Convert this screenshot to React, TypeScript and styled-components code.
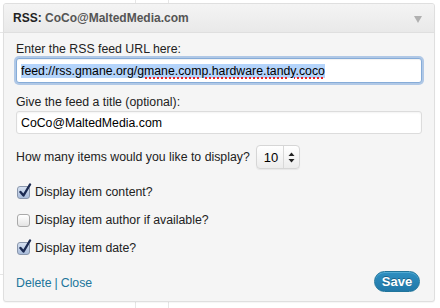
import React from 'react'
import styled, { createGlobalStyle } from 'styled-components'

const GlobalStyle = createGlobalStyle`
  html, body {
    margin: 0;
    padding: 0;
    background-color: #fff;
  }
  body {
    width: 440px;
    height: 308px;
    overflow: hidden;
    font-family: 'Liberation Sans', Arial, sans-serif;
    font-size: 12.3px;
    color: #222;
    background-image:
      linear-gradient(#e6e6e6, #e6e6e6),
      linear-gradient(#e6e6e6, #e6e6e6),
      linear-gradient(#e6e6e6, #e6e6e6),
      linear-gradient(#e6e6e6, #e6e6e6);
    background-repeat: no-repeat;
    background-size: 1px 308px, 1px 308px, 4px 1px, 4px 1px;
    background-position: 135px 0, 168px 0, 0 32px, 0 274px;
  }
`

const Widget = styled.div`
  margin: 3px 0 0 3px;
  width: 430px;
  border: 1px solid #dfdfdf;
  border-radius: 3px;
  background: #f5f5f5;
  box-shadow: 0 1px 1px rgba(0, 0, 0, 0.04);
  overflow: hidden;
`

const Header = styled.div`
  height: 28px;
  display: flex;
  align-items: center;
  justify-content: space-between;
  padding: 0 12px 0 9px;
  background: linear-gradient(#f4f4f4, #e9e9e9);
  border-bottom: 1px solid #dfdfdf;
`

const Title = styled.h3`
  margin: 0;
  font-size: 12px;
  font-weight: bold;
  color: #555;
`

const TitleKey = styled.span`
  color: #222;
`

const Toggle = styled.span`
  width: 0;
  height: 0;
  border-left: 4px solid transparent;
  border-right: 4px solid transparent;
  border-top: 7px solid #b0b0b0;
  margin-top: 2px;
`

const Body = styled.div`
  padding: 8px 12px 9px 12px;
`

const Label = styled.div`
  line-height: 16px;
`

const Field = styled.div<{ $focused?: boolean }>`
  margin-top: 1px;
  height: ${(p) => (p.$focused ? 25 : 23)}px;
  box-sizing: border-box;
  display: flex;
  align-items: center;
  padding: 0 4px;
  background: #fff;
  color: #000;
  border: 1px solid ${(p) => (p.$focused ? '#86acd8' : '#dcdcdc')};
  border-radius: 3px;
  box-shadow: ${(p) =>
    p.$focused
      ? '0 0 0 2px rgba(130, 170, 220, 0.6), inset 0 1px 1px rgba(0,0,0,0.06)'
      : 'inset 0 1px 2px rgba(0,0,0,0.05)'};
  white-space: nowrap;
`

const Selected = styled.span`
  background: #b4d4fb;
`

const Misspelled = styled.span`
  text-decoration: underline dotted #e22;
  text-decoration-thickness: 2px;
  text-underline-offset: 3px;
`

const Group = styled.div<{ $gap: number }>`
  margin-top: ${(p) => p.$gap}px;
`

const SelectRow = styled.div`
  margin-top: 11px;
  display: flex;
  align-items: center;
  gap: 6px;
  height: 24px;
`

const Select = styled.div`
  width: 44px;
  height: 24px;
  box-sizing: border-box;
  display: flex;
  align-items: stretch;
  border: 1px solid #d6d6d6;
  border-radius: 4px;
  background: linear-gradient(#ffffff, #ececec);
  box-shadow: 0 1px 1px rgba(0, 0, 0, 0.06);
  color: #000;
  font-size: 13px;
`

const SelectValue = styled.span`
  flex: 1;
  display: flex;
  align-items: center;
  padding-left: 7px;
  border-right: 1px solid #d8d8d8;
`

const SelectArrows = styled.span`
  width: 15px;
  display: flex;
  align-items: center;
  justify-content: center;
`

const CheckRow = styled.label`
  display: flex;
  align-items: center;
  gap: 5px;
  line-height: 16px;
  margin-top: 12px;
  padding-left: 1px;
  &:first-of-type {
    margin-top: 15px;
  }
`

const Box = styled.span<{ $checked?: boolean }>`
  position: relative;
  width: 13px;
  height: 13px;
  box-sizing: border-box;
  border: 1px solid ${(p) => (p.$checked ? '#8a97ad' : '#a9a9a9')};
  border-radius: 3px;
  background: ${(p) =>
    p.$checked ? 'linear-gradient(#d6e1f1, #a9bcda)' : 'linear-gradient(#ffffff, #e4e4e4)'};
  flex: none;
`

const Tick = styled.svg`
  position: absolute;
  left: 1px;
  top: -4px;
`

const Footer = styled.div`
  margin-top: 15px;
  display: flex;
  align-items: center;
  justify-content: space-between;
  height: 21px;
`

const Links = styled.div`
  margin-top: 3px;
  color: #21759b;
`

const Link = styled.a`
  color: #21759b;
  text-decoration: none;
`

const Sep = styled.span`
  color: #21759b;
  margin: 0 3px;
`

const SaveButton = styled.button`
  height: 21px;
  width: 46px;
  margin-right: 2px;
  padding: 0;
  border: 1px solid #21759b;
  border-radius: 11px;
  background: linear-gradient(#2e8fc1, #2178a8);
  color: #fff;
  font-family: 'Liberation Sans', Arial, sans-serif;
  font-size: 13px;
  font-weight: bold;
  text-shadow: 0 -1px 0 rgba(0, 0, 0, 0.3);
  box-shadow: inset 0 1px 0 rgba(120, 200, 230, 0.5);
`

function Checkbox({ checked, label }: { checked?: boolean; label: string }) {
  return (
    <CheckRow>
      <Box $checked={checked}>
        {checked && (
          <Tick width="13" height="15" viewBox="0 0 13 15">
            <path
              d="M1.5 9 L4.5 12.5 L11 1.5"
              fill="none"
              stroke="#1c2b52"
              strokeWidth="2.4"
              strokeLinecap="round"
              strokeLinejoin="round"
            />
          </Tick>
        )}
      </Box>
      {label}
    </CheckRow>
  )
}

export default function App() {
  return (
    <>
      <GlobalStyle />
      <Widget>
        <Header>
          <Title>
            <TitleKey>RSS:</TitleKey> CoCo@MaltedMedia.com
          </Title>
          <Toggle />
        </Header>
        <Body>
          <Label>Enter the RSS feed URL here:</Label>
          <Field $focused>
            <Selected>
              feed://rss.gmane.org/<Misspelled>gmane.comp.hardware.tandy.coco</Misspelled>
            </Selected>
          </Field>
          <Group $gap={11}>
            <Label>Give the feed a title (optional):</Label>
            <Field>CoCo@MaltedMedia.com</Field>
          </Group>
          <SelectRow>
            <span>How many items would you like to display?</span>
            <Select>
              <SelectValue>10</SelectValue>
              <SelectArrows>
                <svg width="7" height="11" viewBox="0 0 7 11">
                  <path d="M3.5 0.5 L6.5 4 L0.5 4 Z" fill="#222" />
                  <path d="M3.5 10.5 L6.5 7 L0.5 7 Z" fill="#222" />
                </svg>
              </SelectArrows>
            </Select>
          </SelectRow>
          <Checkbox checked label="Display item content?" />
          <Checkbox label="Display item author if available?" />
          <Checkbox checked label="Display item date?" />
          <Footer>
            <Links>
              <Link href="#">Delete</Link>
              <Sep>|</Sep>
              <Link href="#">Close</Link>
            </Links>
            <SaveButton>Save</SaveButton>
          </Footer>
        </Body>
      </Widget>
    </>
  )
}
